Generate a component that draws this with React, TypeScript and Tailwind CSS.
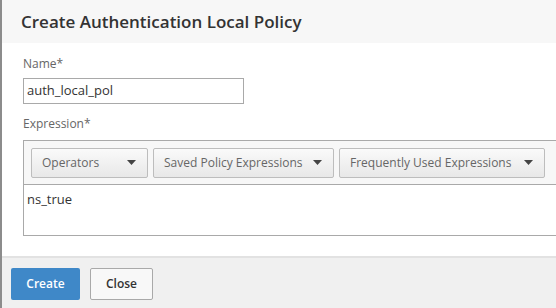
const Caret = () => (
  <svg width="9" height="5" viewBox="0 0 9 5" className="shrink-0">
    <path d="M0 0 L9 0 L4.5 5 Z" fill="#444" />
  </svg>
);

const ToolButton = ({ label, width }: { label: string; width: string }) => (
  <button
    className={`${width} flex h-[30px] items-center justify-between whitespace-nowrap rounded-[2px] border border-[#bdbdbd] bg-gradient-to-b from-[#fafafa] to-[#e8e8e8] pl-[10px] pr-[11px] text-[12px] text-[#666]`}
  >
    <span>{label}</span>
    <Caret />
  </button>
);

const App = () => {
  return (
    <div
      className="flex h-[308px] w-[556px] flex-col overflow-hidden border-l-2 border-[#8c8c8c] bg-white"
      style={{ fontFamily: '"Open Sans", "Liberation Sans", sans-serif' }}
    >
      <div className="flex h-[43px] shrink-0 items-center bg-[#f7f7f7] pl-[19px] text-[17px] font-semibold text-[#333]">
        Create Authentication Local Policy
      </div>

      <div className="flex flex-col pl-[21px] pt-[12px]">
        <label className="text-[12px] leading-[18px] text-[#666]">Name*</label>
        <div className="mt-[5px] flex h-[26px] w-[221px] items-center border border-[#a9a9a9] px-[3px] text-[13px] text-[#333]">
          auth_local_pol
        </div>

        <label className="mt-[11px] text-[12px] leading-[18px] text-[#666]">Expression*</label>
        <div className="mt-[7px] h-[96px] w-[560px] border border-[#a9a9a9]">
          <div className="flex h-[44px] items-center gap-[5px] border-b border-[#a9a9a9] bg-[#f7f7f7] pl-[7px]">
            <ToolButton label="Operators" width="w-[117px]" />
            <ToolButton label="Saved Policy Expressions" width="w-[181px]" />
            <ToolButton label="Frequently Used Expressions" width="w-[206px]" />
          </div>
          <div className="px-[3px] pt-[5px] text-[13px] text-[#333]">ns_true</div>
        </div>
      </div>

      <div className="mt-auto flex h-[52px] shrink-0 gap-[10px] border-t-2 border-[#e2e2e2] bg-[#f0f0f0] pl-[9px] pt-[10px]">
        <button className="h-[32px] w-[69px] rounded-[2px] bg-[#3f88c8] text-[12px] font-semibold text-white">
          Create
        </button>
        <button className="h-[32px] w-[63px] rounded-[2px] border border-[#a9a9a9] bg-[#f8f8f8] text-[12px] font-semibold text-[#333]">
          Close
        </button>
      </div>
    </div>
  );
};

export default App;
